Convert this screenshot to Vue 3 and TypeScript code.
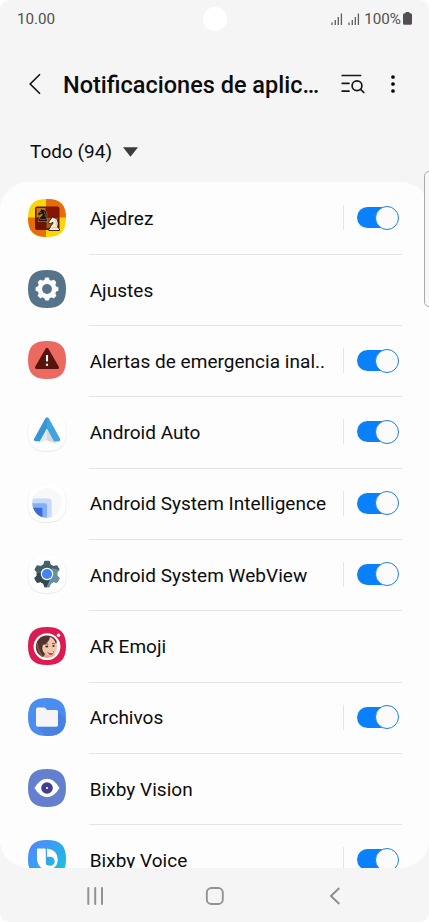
<script setup lang="ts">
interface AppItem {
  id: string
  name: string
  toggle: boolean
}

const apps: AppItem[] = [
  { id: 'chess', name: 'Ajedrez', toggle: true },
  { id: 'settings', name: 'Ajustes', toggle: false },
  { id: 'alerts', name: 'Alertas de emergencia inal..', toggle: true },
  { id: 'auto', name: 'Android Auto', toggle: true },
  { id: 'intelligence', name: 'Android System Intelligence', toggle: true },
  { id: 'webview', name: 'Android System WebView', toggle: true },
  { id: 'emoji', name: 'AR Emoji', toggle: false },
  { id: 'files', name: 'Archivos', toggle: true },
  { id: 'vision', name: 'Bixby Vision', toggle: false },
  { id: 'voice', name: 'Bixby Voice', toggle: true },
]

const squircle = 'M19 0C32.4 0 38 5.6 38 19S32.4 38 19 38 0 32.4 0 19 5.6 0 19 0Z'
const teeth = [0, 45, 90, 135, 180, 225, 270, 315]
const bigTeeth = [0, 60, 120, 180, 240, 300]
</script>

<template>
  <div class="screen">
    <header class="status">
      <span class="time">10.00</span>
      <span class="camera"></span>
      <div class="status-right">
        <svg v-for="n in 2" :key="n" class="signal" width="12" height="12" viewBox="0 0 12 12">
          <path d="M1 9.5V12M4.3 7V12M7.3 4V12M10.4 .5V12" stroke="#5c5c5c" stroke-width="1.3" fill="none" />
        </svg>
        <span class="percent">100%</span>
        <svg width="9" height="13" viewBox="0 0 9 13">
          <path d="M2.6 0H6.4V1.3H7.5Q9 1.3 9 2.8V11.3Q9 12.8 7.5 12.8H1.5Q0 12.8 0 11.3V2.8Q0 1.3 1.5 1.3H2.6Z" fill="#505050" />
        </svg>
      </div>
    </header>

    <div class="toolbar">
      <svg class="back" width="12" height="22" viewBox="0 0 12 22">
        <path d="M11 1.2L1.2 11L11 20.8" fill="none" stroke="#111" stroke-width="1.6" />
      </svg>
      <h1 class="title">Notificaciones de aplic…</h1>
      <svg class="search" width="24" height="20" viewBox="0 0 24 20">
        <g fill="none" stroke="#161616" stroke-width="1.7" stroke-linecap="round">
          <path d="M1.2 1.5H19.6M1.2 9.3H8M1.2 17.2H8" />
          <circle cx="16" cy="11.8" r="4.9" />
          <path d="M19.6 15.4L22.8 18.5" />
        </g>
      </svg>
      <svg class="more" width="4" height="18" viewBox="0 0 4 18">
        <circle cx="2" cy="2" r="1.85" />
        <circle cx="2" cy="9" r="1.85" />
        <circle cx="2" cy="16" r="1.85" />
      </svg>
    </div>

    <div class="filter">
      <span class="filter-text">Todo (94)</span>
      <svg width="15" height="10" viewBox="0 0 15 10"><path d="M0 .3H15L7.5 9.7Z" fill="#3c3c3c" /></svg>
    </div>

    <main class="list">
      <div v-for="app in apps" :key="app.id" class="row">
        <svg class="app-icon" width="40" height="40" viewBox="-1 -1 40 40">
          <g v-if="app.id === 'chess'">
            <clipPath id="chess-clip"><path :d="squircle" /></clipPath>
            <g clip-path="url(#chess-clip)">
              <rect width="38" height="38" fill="#fbd506" />
              <path d="M18 0H38V18.5H18ZM0 18.5H18V38H0Z" fill="#e96c0a" />
              <rect x="7" y="7.5" width="24.5" height="23.5" rx="2" fill="#6b1508" />
              <path d="M18.5 8H30Q31 8 31 9V19H18.5Z" fill="#851606" />
              <path d="M8.5 9H17.5V18.5H8.5Z" fill="#c97313" />
              <path d="M18.5 19H30V29H18.5Z" fill="#a85b10" />
            </g>
            <path d="M11 20.5C11 18 15 17 14.2 14.8L11 17L9.5 15L12.5 11.5L13 9.5L15 10.5C19 11 19.5 15 18.5 19.8L20 22.5H10Z" fill="#17120e" stroke="#d8a469" stroke-width=".5" />
            <path d="M11.5 14.2L13 13.2M16 12.5Q18 15 17.2 18M12 20.4H18" fill="none" stroke="#d8a469" stroke-width=".5" />
            <path d="M22 29C22 26 25.5 25.5 25 23.2L22 25L20.4 23.2L23 20L23.8 17.8L25.8 18.7C30 19 31 24 29.5 28.3L31.5 30V31.5H20.8V30Z" fill="#fff1d5" stroke="#24150e" stroke-width=".9" />
            <path d="M27.3 20.5Q29 23 28 27M23 28.8H29" fill="none" stroke="#b49b7c" stroke-width=".6" />
          </g>

          <g v-else-if="app.id === 'settings'">
            <path :d="squircle" fill="#557389" />
            <g fill="#fff">
              <path v-for="a in teeth" :key="a" d="M16 11L17 8Q17.2 7.6 17.7 7.6H20.3Q20.8 7.6 21 8L22 11Z" :transform="`rotate(${a} 19 19)`" />
              <circle cx="19" cy="19" r="9.4" />
            </g>
            <circle cx="19" cy="19" r="4.9" fill="#557389" />
          </g>

          <g v-else-if="app.id === 'alerts'">
            <path :d="squircle" fill="#ec695f" />
            <path d="M19 8.3L29.5 26.6H8.5Z" fill="#57140d" stroke="#57140d" stroke-width="3" stroke-linejoin="round" />
            <path d="M19 14V20.4" stroke="#fff" stroke-width="2.1" />
            <path d="M19 22.7V24.8" stroke="#fff" stroke-width="2.1" />
          </g>

          <g v-else-if="app.id === 'auto'">
            <path :d="squircle" fill="#dedede" stroke="#ebebeb" transform="translate(0 .5)" />
            <path :d="squircle" fill="#fff" />
            <path d="M19 16L28.6 30.8L19 27.3L9.4 30.8Z" fill="#e8e8e8" />
            <path d="M19 16L28.6 30.8L19 27.3Z" fill="#d8d9db" />
            <path d="M17.3 5.5Q19 3.7 20.7 5.5L32 26Q32.5 28 30.7 28.3H26.2L19 15.2L11.8 28.3H7.3Q5.5 28 6 26Z" fill="#3497d5" />
            <path d="M19 4.6Q20 4.6 20.7 5.5L32 26Q32.5 28 30.7 28.3H26.2L19 15.2Z" fill="#41a4df" />
          </g>

          <g v-else-if="app.id === 'intelligence'">
            <path :d="squircle" fill="#d8d8d8" stroke="#ebebeb" transform="translate(0 .5)" />
            <path :d="squircle" fill="#fff" />
            <clipPath id="asi-clip"><circle cx="19" cy="19" r="14.7" /></clipPath>
            <g clip-path="url(#asi-clip)">
              <rect width="38" height="38" fill="#f8f8f9" />
              <rect x="-8" y="14.5" width="31.8" height="28" rx="3.5" fill="#c8dafb" />
              <rect x="-8" y="19.3" width="27" height="22" rx="2" fill="#86aef5" />
              <rect x="-8" y="23.7" width="22.5" height="20" rx="1" fill="#3b6bd6" />
            </g>
          </g>

          <g v-else-if="app.id === 'webview'">
            <path :d="squircle" fill="#d8d8d8" stroke="#ebebeb" transform="translate(0 .5)" />
            <path :d="squircle" fill="#fff" />
            <clipPath id="gear-clip">
              <circle cx="19" cy="19" r="10.3" />
              <path v-for="a in bigTeeth" :key="a" d="M14.5 12L16.2 6.5Q16.4 5.8 17 5.8H21Q21.6 5.8 21.8 6.5L23.5 12Z" :transform="`rotate(${a} 19 19)`" />
            </clipPath>
            <g clip-path="url(#gear-clip)">
              <rect width="38" height="38" fill="#466069" />
              <path d="M24 13L38 17V38H15L22 24Z" fill="#69909f" />
              <path d="M0 18H15L22 24L16 38H0Z" fill="#304952" />
            </g>
            <circle cx="19" cy="19" r="6.2" fill="#fff" />
            <circle cx="19" cy="19" r="5.1" fill="#4584ef" />
          </g>

          <g v-else-if="app.id === 'emoji'">
            <path :d="squircle" fill="#dc1b50" />
            <circle cx="19" cy="19.7" r="12.5" fill="#fae7e5" stroke="#fff" stroke-width="1.8" />
            <clipPath id="face-clip"><circle cx="19" cy="19.7" r="11.2" /></clipPath>
            <g clip-path="url(#face-clip)">
              <path d="M17 24H25L29 32H14Z" fill="#e7a58a" />
              <path d="M14 13Q20 6 27 12Q31 20 27 26Q22 32 17 26Q13 22 14 13Z" fill="#f4c6ae" />
              <path d="M27 10Q15 3 9 14Q5 25 9 30Q15 32 17 27Q13 23 15 18Q21 16 22 10Q26 11 28 17Q30 13 27 10Z" fill="#51342c" />
              <path d="M9 16Q10 24 14 29" fill="none" stroke="#8b5b46" stroke-width="1.5" />
              <path d="M16.5 17.5Q18.5 16 20.3 17.3M24 16.8Q25.6 15.8 27 17" fill="none" stroke="#4b2925" stroke-width=".8" />
              <ellipse cx="18.8" cy="19.5" rx="1.5" ry="1" fill="#442b29" />
              <ellipse cx="25.5" cy="19" rx="1.2" ry="1" fill="#442b29" />
              <path d="M19 25Q23 26 26.3 23.7Q25 29 21.5 28Z" fill="#d64647" />
              <path d="M20 25.4Q23 26 25.6 24.6L24.8 26H21Z" fill="#fff" />
            </g>
            <circle cx="30.5" cy="8.3" r="1.7" fill="#fff" />
          </g>

          <g v-else-if="app.id === 'files'">
            <clipPath id="files-clip"><path :d="squircle" /></clipPath>
            <path :d="squircle" fill="#4b8df1" />
            <path d="M30 13.5L38 21.5V38H18L8.5 28.5Z" fill="#4781e3" clip-path="url(#files-clip)" />
            <path d="M8 11.2Q8 9.6 9.6 9.6H16.2Q17 9.6 17.5 10.2L19.2 12H28.4Q30 12 30 13.6V27Q30 28.7 28.4 28.7H9.6Q8 28.7 8 27Z" fill="#f5f5f7" />
          </g>

          <g v-else-if="app.id === 'vision'">
            <path :d="squircle" fill="#637fcd" />
            <path d="M6.5 19Q12 9.8 19 9.8T31.5 19Q26 28.2 19 28.2T6.5 19Z" fill="#fff" />
            <circle cx="19" cy="19" r="5.8" fill="#433c8f" />
            <circle cx="19" cy="19" r="1.1" fill="#fff" />
          </g>

          <g v-else>
            <defs>
              <linearGradient id="voice-bg" x1="0" y1="0" x2="1" y2="1">
                <stop offset=".15" stop-color="#4b8dfb" />
                <stop offset=".7" stop-color="#24b5e4" />
                <stop offset="1" stop-color="#1ad0c8" />
              </linearGradient>
            </defs>
            <path :d="squircle" fill="url(#voice-bg)" />
            <path d="M9.8 8.5H16.6Q17.8 8.5 17.8 9.8V29.8Q9 27.5 9 18V9.5Q9 8.5 9.8 8.5Z" fill="#fff" />
            <path d="M19 8.5Q29.8 10 29.8 19.5Q29.5 29 19 30Q14 29 12 26L17 23.5Q20 26.5 23 25.7Q27 24.5 26.7 20.7Q25.7 16.8 22 16.7H19Z" fill="#fff" />
          </g>
        </svg>

        <div class="row-body">
          <span class="app-name">{{ app.name }}</span>
          <div v-if="app.toggle" class="switch-area">
            <div class="switch"><span class="thumb"></span></div>
          </div>
        </div>
      </div>
    </main>

    <nav class="nav">
      <svg width="17" height="18" viewBox="0 0 17 18">
        <path d="M1.3 1V17M8.2 1V17M15 1V17" stroke="#929292" stroke-width="2" stroke-linecap="round" />
      </svg>
      <svg class="home" width="20" height="20" viewBox="0 0 20 20">
        <rect x="1.8" y="2" width="16" height="16" rx="4.5" fill="none" stroke="#929292" stroke-width="1.9" />
      </svg>
      <svg width="12" height="18" viewBox="0 0 12 18">
        <path d="M10.3 1L2 9L10.3 17" fill="none" stroke="#8c8c8c" stroke-width="1.9" />
      </svg>
    </nav>

    <div class="edge-handle"></div>
  </div>
</template>

<style>
body {
  background: #ffffff;
}
</style>

<style scoped>
.screen {
  position: relative;
  display: flex;
  flex-direction: column;
  width: 429px;
  height: 922px;
  overflow: hidden;
  border-radius: 9px;
  background: #f5f5f5;
  color: #0c0c0c;
  font-family: Roboto, "Liberation Sans", sans-serif;
}

.status {
  display: grid;
  grid-template-columns: 1fr 24px 1fr;
  align-items: center;
  flex: none;
  height: 37px;
  padding: 0 17px;
  box-sizing: border-box;
  color: #505050;
  font-size: 15.2px;
}

.camera {
  width: 24px;
  height: 24px;
  border-radius: 50%;
  background: #ffffff;
}

.status-right {
  display: flex;
  align-items: center;
  justify-content: flex-end;
}

.signal {
  margin-right: 4.5px;
}

.percent {
  margin-right: 2px;
}

.toolbar {
  display: flex;
  align-items: center;
  flex: none;
  height: 93px;
  padding: 0 34px 0 29px;
  box-sizing: border-box;
}

.title {
  flex: 1;
  margin: 0 0 0 22px;
  padding-top: 2px;
  font-size: 23.5px;
  font-weight: 500;
  line-height: 32px;
  white-space: nowrap;
}

.search {
  margin-right: 26px;
}

.filter {
  display: flex;
  align-items: center;
  gap: 11px;
  flex: none;
  height: 52px;
  padding: 0 30px 9px;
  box-sizing: border-box;
  font-size: 19px;
}

.list {
  flex: none;
  height: 686px;
  overflow: hidden;
  border-radius: 28px;
  padding-top: 1.6px;
  box-sizing: border-box;
  background: #fdfdfd;
}

.row {
  display: flex;
  height: 71.3px;
  padding: 0 27px;
}

.app-icon {
  flex: none;
  margin-top: 14.2px;
}

.row-body {
  display: flex;
  flex: 1;
  align-items: center;
  justify-content: space-between;
  margin-left: 22px;
  border-bottom: 1px solid #e5e5e5;
}

.app-name {
  margin-left: 0.7px;
  padding-top: 1px;
  font-size: 19px;
  line-height: 24px;
  letter-spacing: 0.03px;
  white-space: nowrap;
}

.switch-area {
  display: flex;
  align-items: center;
  height: 25px;
  padding-left: 13px;
  border-left: 1px solid #e5e5e5;
  margin-right: 3px;
  margin-bottom: 1.6px;
}

.switch {
  display: flex;
  align-items: center;
  justify-content: flex-end;
  width: 42px;
  height: 21px;
  border-radius: 11px;
  background: linear-gradient(90deg, #0a80fb 70%, transparent 70%);
}

.thumb {
  flex: none;
  width: 24px;
  height: 24px;
  box-sizing: border-box;
  border: 1px solid #1e7fe0;
  border-radius: 50%;
  background: #fbfbfb;
}

.nav {
  display: flex;
  align-items: center;
  justify-content: space-between;
  flex: none;
  height: 54px;
  padding: 2px 88px 0 86.5px;
  box-sizing: border-box;
}

.home {
  margin-right: 2px;
}

.edge-handle {
  position: absolute;
  top: 171px;
  right: -6px;
  width: 11px;
  height: 136px;
  box-sizing: border-box;
  border: 1px solid #a9a9a9;
  border-radius: 5px;
  background: #f8f8f8;
}
</style>
